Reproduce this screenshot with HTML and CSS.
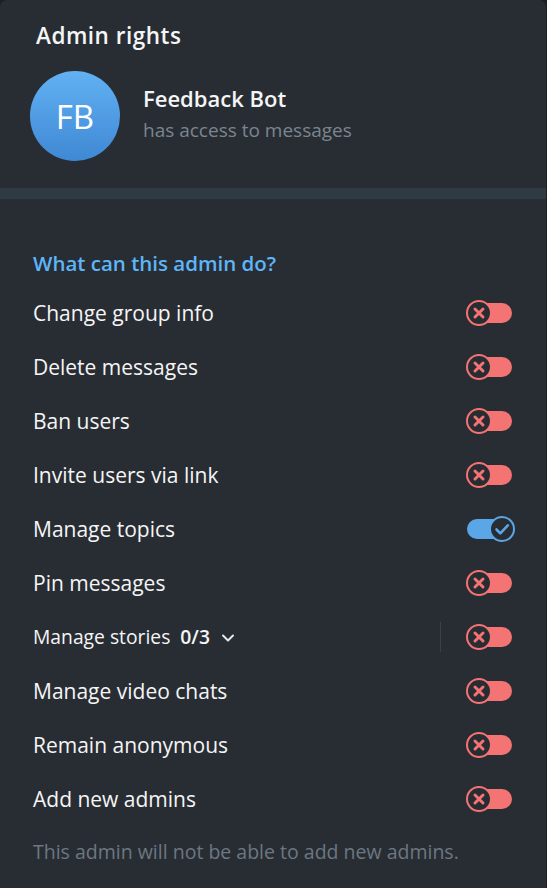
FILE: index.html
```html
<!DOCTYPE html>
<html>
<head>
<meta charset="utf-8">
<link rel="stylesheet" href="styles.css">
</head>
<body>
<div class="panel">
  <div class="top">
    <div class="title">Admin rights</div>
    <div class="profile">
      <div class="avatar">FB</div>
      <div class="pinfo">
        <div class="pname">Feedback Bot</div>
        <div class="pstatus">has access to messages</div>
      </div>
    </div>
  </div>
  <div class="band"></div>
  <div class="subhead">What can this admin do?</div>
  <div class="rows">
    <div class="row"><span class="label">Change group info</span><span class="tg off"><span class="knob"><svg viewBox="0 0 26 26"><path d="M9 9l8 8M17 9l-8 8"/></svg></span></span></div>
    <div class="row"><span class="label">Delete messages</span><span class="tg off"><span class="knob"><svg viewBox="0 0 26 26"><path d="M9 9l8 8M17 9l-8 8"/></svg></span></span></div>
    <div class="row"><span class="label">Ban users</span><span class="tg off"><span class="knob"><svg viewBox="0 0 26 26"><path d="M9 9l8 8M17 9l-8 8"/></svg></span></span></div>
    <div class="row"><span class="label">Invite users via link</span><span class="tg off"><span class="knob"><svg viewBox="0 0 26 26"><path d="M9 9l8 8M17 9l-8 8"/></svg></span></span></div>
    <div class="row"><span class="label">Manage topics</span><span class="tg on"><span class="knob"><svg viewBox="0 0 26 26"><path d="M7.5 13.5l3.8 3.8 7.5-8"/></svg></span></span></div>
    <div class="row"><span class="label">Pin messages</span><span class="tg off"><span class="knob"><svg viewBox="0 0 26 26"><path d="M9 9l8 8M17 9l-8 8"/></svg></span></span></div>
    <div class="row"><span class="label small">Manage stories <b class="count">0/3</b><svg class="chev" viewBox="0 0 14 10"><path d="M2 2.5l5 5 5-5"/></svg></span><span class="vsep"></span><span class="tg off"><span class="knob"><svg viewBox="0 0 26 26"><path d="M9 9l8 8M17 9l-8 8"/></svg></span></span></div>
    <div class="row"><span class="label">Manage video chats</span><span class="tg off"><span class="knob"><svg viewBox="0 0 26 26"><path d="M9 9l8 8M17 9l-8 8"/></svg></span></span></div>
    <div class="row"><span class="label">Remain anonymous</span><span class="tg off"><span class="knob"><svg viewBox="0 0 26 26"><path d="M9 9l8 8M17 9l-8 8"/></svg></span></span></div>
    <div class="row"><span class="label">Add new admins</span><span class="tg off"><span class="knob"><svg viewBox="0 0 26 26"><path d="M9 9l8 8M17 9l-8 8"/></svg></span></span></div>
  </div>
  <div class="footer">This admin will not be able to add new admins.</div>
</div>
</body>
</html>
```

FILE: styles.css
```css
html, body {
  margin: 0;
  padding: 0;
  background: #1c2025;
}
body {
  width: 547px;
  height: 888px;
  overflow: hidden;
  font-family: "Open Sans", "DejaVu Sans", sans-serif;
  color: #f5f5f5;
}
.panel {
  width: 546px;
  height: 888px;
  background: #282d34;
  border-radius: 7px 7px 0 0;
  overflow: hidden;
}
.top {
  padding: 21px 0 0 36px;
}
.title {
  font-size: 22.5px;
  font-weight: 600;
  line-height: 30px;
  letter-spacing: 0.5px;
}
.profile {
  display: flex;
  align-items: center;
  margin-top: 20px;
  margin-left: -6px;
}
.avatar {
  width: 90px;
  height: 90px;
  border-radius: 50%;
  background: linear-gradient(to bottom, #62b1f4, #3f88d3);
  color: #fff;
  font-size: 33px;
  font-weight: 500;
  display: flex;
  align-items: center;
  justify-content: center;
}
.pinfo {
  margin-left: 23px;
  margin-top: -4px;
}
.pname {
  font-size: 22px;
  font-weight: 600;
  line-height: 28px;
}
.pstatus {
  font-size: 19px;
  color: #7b858e;
  line-height: 28px;
  margin-top: 4px;
}
.band {
  margin-top: 27px;
  height: 11px;
  background: #303a42;
}
.subhead {
  margin-top: 50px;
  padding-left: 33px;
  font-size: 20.5px;
  font-weight: 600;
  line-height: 28px;
  color: #5eb5f7;
}
.rows {
  margin-top: 9px;
}
.row {
  height: 54px;
  display: flex;
  align-items: center;
  padding-left: 33px;
  padding-right: 34px;
}
.label {
  flex: 1;
  font-size: 21px;
  line-height: 28px;
}
.label.small {
  font-size: 19.3px;
  display: flex;
  align-items: center;
}
.count {
  font-weight: 600;
  margin-left: 10px;
}
.chev {
  width: 14px;
  height: 10px;
  margin-left: 11px;
  margin-top: 2px;
  fill: none;
  stroke: #e8e8e8;
  stroke-width: 2;
  stroke-linecap: round;
  stroke-linejoin: round;
}
.vsep {
  width: 1px;
  height: 30px;
  background: #3a4048;
  margin-right: 26px;
}
.tg {
  position: relative;
  width: 45px;
  height: 20px;
  border-radius: 10px;
}
.tg.off { background: #f47373; }
.tg.on { background: #5ba6e6; width: 36px; margin-right: 9px; }
.knob {
  position: absolute;
  top: -3px;
  width: 26px;
  height: 26px;
  box-sizing: border-box;
  border-radius: 50%;
  background: #282d34;
  border: 2.5px solid;
}
.tg.off .knob { left: -1px; border-color: #f47373; }
.tg.on .knob { left: 22px; border-color: #5ba6e6; }
.knob svg {
  position: absolute;
  left: -2.5px;
  top: -2.5px;
  width: 26px;
  height: 26px;
  fill: none;
  stroke-width: 3;
  stroke-linecap: round;
  stroke-linejoin: round;
}
.tg.off .knob svg { stroke: #f47373; }
.tg.on .knob svg { stroke: #5ba6e6; stroke-width: 2.6; }
.footer {
  margin-top: 13px;
  padding-left: 33px;
  font-size: 19.5px;
  line-height: 26px;
  color: #6d7780;
}
```
